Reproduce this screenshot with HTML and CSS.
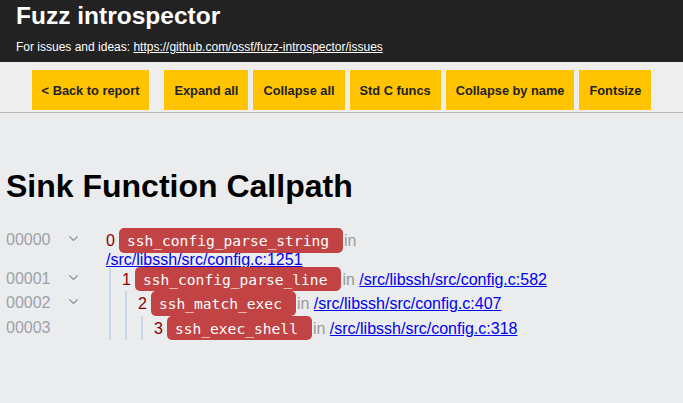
FILE: index.html
```html
<!DOCTYPE html>
<html lang="en">
<head>
<meta charset="utf-8">
<title>Fuzz introspector</title>
<link rel="stylesheet" href="styles.css">
</head>
<body>
<header class="header">
  <div class="title">Fuzz introspector</div>
  <div class="subtitle">For issues and ideas: <a href="#">https://github.com/ossf/fuzz-introspector/issues</a></div>
</header>
<nav class="nav">
  <div class="btn back">&lt; Back to report</div>
  <div class="btn">Expand all</div>
  <div class="btn">Collapse all</div>
  <div class="btn">Std C funcs</div>
  <div class="btn">Collapse by name</div>
  <div class="btn">Fontsize</div>
</nav>
<main class="main">
  <h1 class="heading">Sink Function Callpath</h1>
  <div class="tree">
    <div class="row">
      <span class="lineno">00000</span>
      <span class="toggle"><svg width="9" height="5" viewBox="0 0 9 5"><polyline points="0.5,0.5 4.5,4.5 8.5,0.5" fill="none" stroke="#8a9097" stroke-width="1.1"/></svg></span>
      <div class="node">
        <div class="call"><span class="depth">0</span><code class="fn">ssh_config_parse_string</code><span class="in">in</span> <a href="#">/src/libssh/src/config.c:1251</a></div>
      </div>
    </div>
    <div class="row">
      <span class="lineno">00001</span>
      <span class="toggle"><svg width="9" height="5" viewBox="0 0 9 5"><polyline points="0.5,0.5 4.5,4.5 8.5,0.5" fill="none" stroke="#8a9097" stroke-width="1.1"/></svg></span>
      <div class="node">
        <span class="guide"></span>
        <div class="call"><span class="depth">1</span><code class="fn">ssh_config_parse_line</code><span class="in">in</span> <a href="#">/src/libssh/src/config.c:582</a></div>
      </div>
    </div>
    <div class="row">
      <span class="lineno">00002</span>
      <span class="toggle"><svg width="9" height="5" viewBox="0 0 9 5"><polyline points="0.5,0.5 4.5,4.5 8.5,0.5" fill="none" stroke="#8a9097" stroke-width="1.1"/></svg></span>
      <div class="node">
        <span class="guide"></span><span class="guide"></span>
        <div class="call"><span class="depth">2</span><code class="fn">ssh_match_exec</code><span class="in">in</span> <a href="#">/src/libssh/src/config.c:407</a></div>
      </div>
    </div>
    <div class="row">
      <span class="lineno">00003</span>
      <span class="toggle"></span>
      <div class="node">
        <span class="guide"></span><span class="guide"></span><span class="guide"></span>
        <div class="call"><span class="depth">3</span><code class="fn">ssh_exec_shell</code><span class="in">in</span> <a href="#">/src/libssh/src/config.c:318</a></div>
      </div>
    </div>
  </div>
</main>
</body>
</html>
```
FILE: styles.css
```css
html, body {
  margin: 0;
  padding: 0;
}
body {
  background: #ebecee;
  font-family: "Liberation Sans", Arial, sans-serif;
  color: #000;
  min-height: 403px;
}
.header {
  background: #222222;
  color: #fff;
  padding: 2px 16px 8px;
}
.title {
  font-size: 24.5px;
  font-weight: bold;
  line-height: 28px;
}
.subtitle {
  font-size: 12px;
  line-height: 14px;
  margin-top: 10px;
}
.subtitle a {
  color: #fff;
}
.nav {
  background: #eeeeee;
  border-bottom: 1px solid #b9b9b9;
  display: flex;
  justify-content: center;
  gap: 5px;
  padding: 8px 0 2px;
}
.btn {
  background: #ffc300;
  height: 40px;
  padding: 0 10px;
  display: flex;
  align-items: center;
  font-size: 12.8px;
  font-weight: bold;
  color: #222;
  white-space: nowrap;
}
.btn.back {
  margin-right: 10px;
}
.main {
  padding: 0 6px;
}
.heading {
  font-size: 32px;
  line-height: 37px;
  font-weight: bold;
  margin: 55px 0 23px;
}
.tree {
  width: 547px;
}
.row {
  display: flex;
  align-items: stretch;
}
.lineno {
  width: 60px;
  flex: none;
  font-size: 16px;
  line-height: 24.5px;
  color: #9da2a9;
}
.toggle {
  width: 40px;
  flex: none;
}
.toggle svg {
  display: block;
  margin: 8px 0 0 3px;
}
.node {
  flex: 1;
  min-width: 0;
  display: flex;
}
.guide {
  width: 16px;
  flex: none;
  background: linear-gradient(to right, transparent 3px, #c9d7e6 3px, #c9d7e6 5px, transparent 5px);
}
.call {
  flex: 1;
  min-width: 0;
  font-size: 16px;
  line-height: 14px;
}
.depth {
  color: #8b0000;
}
.fn {
  display: inline-block;
  margin-left: 4px;
  padding: 4px 14px 3.5px 8px;
  line-height: 17px;
  font-family: "DejaVu Sans Mono", "Liberation Mono", monospace;
  font-size: 14.6px;
  background: #c14343;
  color: #fff;
  border-radius: 5px;
}
.in {
  color: #9a9a9a;
  margin-left: 1px;
}
.call a {
  color: #0000ee;
}
```
